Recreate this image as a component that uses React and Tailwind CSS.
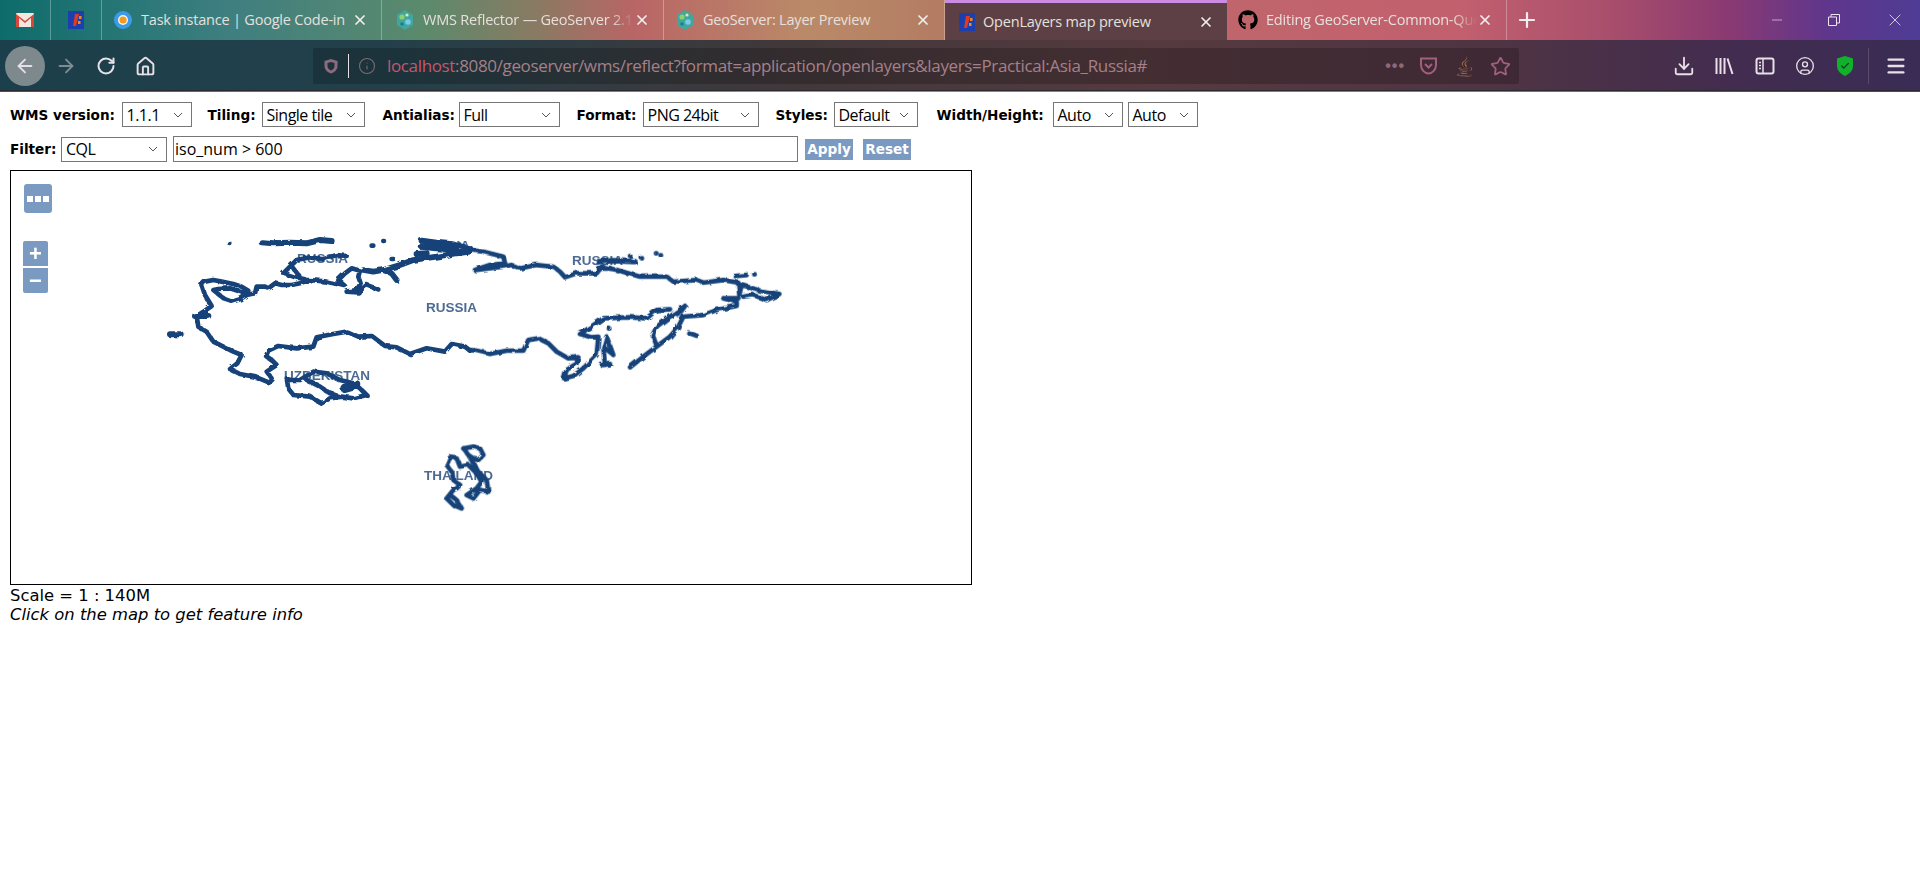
import { ArrowLeft, ArrowRight, RotateCw, Home, Download, X, Plus, Minus, Star, Info, Menu, CircleUser, Check } from "lucide-react";
import { FaGithub, FaJava } from "react-icons/fa";

const OlIcon = () => (
  <svg width="16" height="18" viewBox="0 0 16 18" className="shrink-0">
    <rect width="16" height="18" fill="#1c3fb0" />
    <path d="M5 15 L7 3 L11 3 L8 15 Z" fill="#e23a1e" />
    <rect x="11" y="5" width="2.5" height="3" fill="#f08a20" />
    <rect x="10" y="10" width="2.5" height="3" fill="#f08a20" />
  </svg>
);

const GeoIcon = () => (
  <svg width="20" height="20" viewBox="0 0 20 20" className="shrink-0">
    <path d="M10 0 L18 5 L18 15 L10 20 L2 15 L2 5 Z" fill="#3fa7a0" />
    <circle cx="7" cy="7" r="2.6" fill="#8fd06a" />
    <circle cx="13" cy="12" r="2.8" fill="#7cc8e8" />
    <circle cx="12" cy="5" r="1.6" fill="#dfe9b0" />
    <circle cx="7" cy="14" r="1.8" fill="#1e7f8c" />
  </svg>
);

const CodeInIcon = () => (
  <svg width="20" height="20" viewBox="0 0 20 20" className="shrink-0">
    <circle cx="10" cy="10" r="9" fill="#3b9be8" />
    <circle cx="10" cy="10" r="5" fill="#f5f5f0" />
    <circle cx="10" cy="10" r="3.6" fill="#f59a1c" />
  </svg>
);

const GmailIcon = () => (
  <svg width="18" height="14" viewBox="0 0 18 14">
    <rect width="18" height="14" rx="1" fill="#f1e6e0" />
    <path d="M0 1 L9 8 L18 1 L18 14 L15 14 L15 5 L9 10 L3 5 L3 14 L0 14 Z" fill="#d8483a" />
  </svg>
);

const Tab = ({ icon, title, w, pl, active, fade }) => (
  <div
    className={`h-10 flex items-center shrink-0 ${active ? "bg-[#5d4045] border-t-[3px] border-[#cb8be0]" : "border-r border-white/30"}`}
    style={{ width: w, paddingLeft: pl }}
  >
    {icon}
    <span
      className={`ml-[8px] w-[216px] text-[14.5px] text-[#e6e0dc] whitespace-nowrap overflow-hidden font-['Open_Sans',sans-serif] tracking-[-0.2px] ${fade ? "[mask-image:linear-gradient(to_left,transparent,black_24px)]" : ""}`}
    >
      {title}
    </span>
    <X size={16} strokeWidth={2.6} className="text-[#f2eeee] ml-auto mr-[13px] shrink-0" />
  </div>
);

const Sel = ({ w, children }) => (
  <span
    className="h-[25px] border border-[#767676] bg-white flex items-center pl-[4px] pr-[8px] text-[16px] text-black shrink-0 justify-between font-['Open_Sans',sans-serif] tracking-[-0.5px]"
    style={{ width: w }}
  >
    {children}
    <svg width="10" height="6" viewBox="0 0 10 6" className="shrink-0">
      <path d="M1 1 L5 5 L9 1" fill="none" stroke="#555" strokeWidth="1" />
    </svg>
  </span>
);

const Lbl = ({ w, children }) => (
  <b className="text-[13.6px] pt-[1px] font-bold text-black shrink-0 font-['DejaVu_Sans',sans-serif]" style={{ width: w }}>
    {children}
  </b>
);

const Btn = ({ w, children }) => (
  <span
    className="h-[21px] bg-[#7b9ac2] text-white font-bold text-[13.6px] flex items-center justify-center shrink-0 font-['DejaVu_Sans',sans-serif]"
    style={{ width: w }}
  >
    {children}
  </span>
);

const ZoomBtn = ({ children, cls }) => (
  <div className={`w-[25px] h-[25px] bg-[#7b9ac2] flex items-center justify-center text-white ${cls}`}>{children}</div>
);

const Map = () => (
  <svg width="960" height="413" viewBox="11 171 960 413" className="block blur-[0.4px]">
    <defs>
      <filter id="coast" x="11" y="171" width="960" height="413" filterUnits="userSpaceOnUse">
        <feTurbulence type="fractalNoise" baseFrequency="0.14" numOctaves="2" seed="4" />
        <feDisplacementMap in="SourceGraphic" scale="4" />
      </filter>
    </defs>
    <g fill="#4d6a92" fontFamily="Liberation Sans, sans-serif" fontWeight="700" fontSize="13.5">
      <text x="297" y="263">RUSSIA</text>
      <text x="419" y="250">RUSSIA</text>
      <text x="572" y="265">RUSSIA</text>
      <text x="426" y="312">RUSSIA</text>
      <text x="284" y="380">UZBEKISTAN</text>
      <text x="424" y="480">THAILAND</text>
    </g>
    <g fill="none" stroke="#134279" strokeLinejoin="round" strokeLinecap="round" filter="url(#coast)">
      <g transform="translate(150 220) scale(0.3333)" strokeWidth="14">
        <path d="M155 195 L165 185 L190 180 L215 185 L250 192 L275 200 L295 212 L290 222 L270 215 L240 205 L205 207 L190 210 L205 222 L225 238 L245 245 L270 238 L290 225 L315 220 L320 200 L345 200 L355 205 L375 190 L395 195 L425 195 L450 190 L475 180 L500 182 L530 185 L560 192 L585 198 L565 180 L585 160 L605 145 L630 152 L625 170 L632 190 L620 210 L590 215 L625 217 L650 195 L685 208" />
        <path d="M640 150 L670 155 L700 150 L725 160 L740 180 M700 150 L750 135 L790 120 L860 110 L920 100 L960 95" strokeWidth="17" />
        <path d="M400 160 L425 135 L440 120 L480 112 L520 118 L560 105 L590 108 M400 160 L430 170 L465 178 M430 145 L445 165" />
        <path d="M335 67 L370 70 L420 68 L470 70 L510 60 L545 63" strokeWidth="18" />
        <path d="M241 72 L241 72 M665 77 L670 77 M700 63 L702 63 M725 117 L730 117" strokeWidth="14" />
        <path d="M815 62 L860 68 L900 72 L960 85 M815 80 L860 85 L920 90 M800 102 L830 100" strokeWidth="18" />
        <path d="M155 195 L165 225 L185 258 L165 272 L140 288 L145 320 L170 335 L190 365 L220 380 L250 395 L275 405 L262 430 L240 447 L270 462 L320 472 L358 488 L368 478 L350 455 L380 435 L365 420 L348 408 L355 392 L385 378 L440 385 L490 380 L500 352 L550 342 L590 335 L625 350 L665 348 L705 378 L740 382 L780 402 L830 385 L885 395 L905 372 L945 380 L960 392" />
        <path d="M135 288 L175 288 M60 343 L92 343" strokeWidth="18" />
        <path d="M410 475 L415 505 L430 525 L480 530 L515 550 L540 535 L575 530 L610 535 L650 525 L635 510 L610 490 L570 480 L530 460 L490 455 L450 480 L420 480 L410 475 M470 480 L510 500 L540 520 L570 530" />
        <path d="M585 505 L620 495" strokeWidth="28" />
      </g>
      <g transform="translate(470 220) scale(0.3333)" strokeWidth="14">
        <path d="M0 90 L40 95 L100 110 L105 130 L60 135 L15 150 L100 140 L125 135 L150 145 L200 135 L250 140 L270 155 L285 172 L320 160 L380 160 L395 140 L440 150 L510 170 L590 170 L610 185 L680 180 L700 188 L760 180 L805 188 L808 225 L815 195 L870 212 L928 222 L890 240 L850 225 L820 230" />
        <path d="M385 125 L430 122 L495 125 M385 145 L420 145" strokeWidth="16" />
        <path d="M805 235 L760 235 L800 245 L800 258 L740 270 L700 285 L640 290 L625 320 L600 350 L560 380 L520 410 L480 442 M645 258 L600 290 L560 320 L548 345 L560 378 M645 258 L625 285" />
        <path d="M600 268 L560 270 L530 295 L480 292 L400 295 L370 315 L330 342 L365 352 L385 350 L380 405 L340 445 L310 468 L282 475 L290 450 L320 430 L325 412 L295 415 L260 395 L235 370 L205 355 L175 360 L160 392 L110 392 L60 402 L20 392 L0 390" />
        <path d="M410 350 L400 385 L405 435 M410 350 L430 405 L400 380 M395 435 L420 432" />
        <path d="M417 326 L418 326 M655 338 L680 347 M795 168 L830 165 M853 163 L854 163 M480 108 L481 108 M515 115 L516 115 M558 100 L559 100 M572 106 L573 106" />
      </g>
      <g transform="translate(260 340) scale(0.3333)" strokeWidth="14">
        <path d="M610 325 L640 320 L660 325 L670 345 L655 360 L640 355 L625 345 L610 325 M625 345 L640 370 L655 395 L680 420 L685 455 L660 450 L640 475 L620 465 L650 445 L665 425 L645 395 L625 375 L600 380 L590 355 L570 352 L560 375 L575 395 L580 420 L600 435 L590 445 L580 450 L560 475 L580 495 L605 505 L590 480 L570 465" />
      </g>
    </g>
  </svg>
);

export default function App() {
  return (
    <div className="min-h-[889px] bg-white font-['Liberation_Sans',sans-serif]">
      <header className="h-[92px] bg-[linear-gradient(90deg,#0d6c6a_0%,#3f7f80_12%,#5b8a6c_22%,#8a7a62_28%,#b96566_33%,#ba8a68_42%,#b27a62_50%,#c0666c_62%,#c2606e_76%,#a84e6c_84%,#8a3a72_90%,#60368c_95%,#4e3c94_100%)] flex flex-col">
        <div className="h-10 flex items-center shrink-0">
          <div className="w-[51px] h-10 flex items-center justify-center border-r border-white/30 shrink-0">
            <GmailIcon />
          </div>
          <div className="w-[51px] h-10 flex items-center justify-center border-r border-white/30 shrink-0">
            <OlIcon />
          </div>
          <Tab icon={<CodeInIcon />} title="Task instance | Google Code-in" w={280} pl={11} />
          <Tab icon={<GeoIcon />} title="WMS Reflector — GeoServer 2.16.x User Manual" w={282} pl={13} fade />
          <Tab icon={<GeoIcon />} title="GeoServer: Layer Preview" w={281} pl={11} />
          <Tab icon={<OlIcon />} title="OpenLayers map preview" w={282} pl={14} active />
          <Tab icon={<FaGithub size={20} className="text-black shrink-0" />} title="Editing GeoServer-Common-Query" w={280} pl={11} fade />
          <Plus size={24} strokeWidth={2.2} className="text-[#f4eeee] ml-[8px]" />
          <div className="ml-auto flex items-center text-[#ece4ec]">
            <Minus size={16} strokeWidth={1} className="mr-[42px]" />
            <svg width="14" height="14" viewBox="0 0 14 14" className="mr-[44px]">
              <path d="M1.5 4 H9.5 V12.5 H1.5 Z M4 4 V1.5 H12.5 V10 H9.5" fill="none" stroke="currentColor" />
            </svg>
            <X size={20} strokeWidth={1} className="mr-[15px]" />
          </div>
        </div>
        <div className="h-[51px] pt-[2px] bg-[linear-gradient(90deg,#1b3f4b_0%,#23404a_20%,#40383a_40%,#553a3f_60%,#4f3443_78%,#432c4f_90%,#3a2c55_100%)] border-b border-[#2a2a30] flex items-center shrink-0">
          <div className="w-10 h-10 ml-[5px] rounded-full bg-[#7d898c] flex items-center justify-center">
            <ArrowLeft size={22} strokeWidth={2} className="text-[#e6dfe6]" />
          </div>
          <ArrowRight size={22} strokeWidth={2} className="text-[#7d8d92] ml-[10px]" />
          <RotateCw size={20} strokeWidth={2.4} className="text-[#e8e0e8] ml-[19px]" />
          <Home size={21} strokeWidth={2.2} className="text-[#e8e0e8] ml-[19px]" />
          <div className="ml-[157px] w-[1206px] h-[36px] bg-black/20 rounded-[2px] flex items-center pl-[9px]">
            <svg width="18" height="18" viewBox="0 0 18 18" className="shrink-0">
              <path d="M9 2 L15.5 4 V9 C15.5 13 12 15.5 9 16.5 C6 15.5 2.5 13 2.5 9 V4 Z M9 5 L12.5 6 V9 C12.5 11 11 12.5 9 13.5 C7 12.5 5.5 11 5.5 9 V6 Z" fill="#8d6a80" fillRule="evenodd" />
            </svg>
            <div className="w-px h-6 bg-[#e8e0e8] ml-[8px]" />
            <Info size={18} strokeWidth={1.5} className="text-[#7d6a70] ml-[9px]" />
            <span className="ml-[11px] text-[17px] text-[#a5808a] font-['Open_Sans',sans-serif] tracking-[-0.35px] whitespace-nowrap">
              <span className="text-[#c4576f]">localhost</span>:8080/geoserver/wms/reflect?format=application/openlayers&amp;layers=Practical:Asia_Russia#
            </span>
            <div className="ml-auto flex items-center">
              <span className="text-[#8d6a78] text-[16px] font-bold tracking-[1px] leading-none">•••</span>
              <svg width="21" height="20" viewBox="0 0 21 20" className="ml-[13px]">
                <path d="M3 2.5 H18 V9 C18 14 14 17.5 10.5 17.5 C7 17.5 3 14 3 9 Z M7 8 L10.5 11.5 L14 8" fill="none" stroke="#a0607e" strokeWidth="2" />
              </svg>
              <FaJava size={21} className="text-[#9a6a44] ml-[15px]" />
              <Star size={21} strokeWidth={2} className="text-[#a0607e] ml-[15px] mr-[8px]" />
            </div>
          </div>
          <div className="ml-auto flex items-center text-[#e8dfe8]">
            <Download size={22} strokeWidth={2} className="mr-[19px]" />
            <svg width="20" height="20" viewBox="0 0 20 20" className="mr-[21px]">
              <path d="M2.5 2 V18 M6.5 2 V18 M10.5 2 V18 M13.5 2.5 L18.5 18" fill="none" stroke="currentColor" strokeWidth="2" />
            </svg>
            <svg width="20" height="20" viewBox="0 0 20 20" className="mr-[20px]">
              <rect x="1.5" y="2.5" width="17" height="15" rx="2" fill="none" stroke="currentColor" strokeWidth="2" />
              <path d="M8 3 V17 M4 6.5 H6 M4 9.5 H6 M4 12.5 H6" stroke="currentColor" strokeWidth="1.5" />
            </svg>
            <CircleUser size={20} strokeWidth={1.6} className="mr-[22px]" />
            <div className="relative w-[16px] h-[20px] mr-[15px]">
              <svg width="16" height="20" viewBox="0 0 16 20" className="block">
                <path d="M8 0 L16 2.5 V10 C16 15 12 18 8 20 C4 18 0 15 0 10 V2.5 Z" fill="#12b02c" />
              </svg>
              <Check size={10} strokeWidth={3} className="absolute left-[3px] top-[5px] text-[#1b3a20]" />
            </div>
            <div className="w-px h-9 bg-white/15 mr-[16px]" />
            <Menu size={22} strokeWidth={2.6} className="mr-[13px]" />
          </div>
        </div>
      </header>

      <main className="pl-[10px]">
        <div className="flex items-center h-[25px] mt-[10px]">
          <Lbl w={111.5}>WMS version:</Lbl>
          <Sel w={70}>1.1.1</Sel>
          <span className="w-4 shrink-0" />
          <Lbl w={54}>Tiling:</Lbl>
          <Sel w={103}>Single tile</Sel>
          <span className="w-[18px] shrink-0" />
          <Lbl w={76}>Antialias:</Lbl>
          <Sel w={101}>Full</Sel>
          <span className="w-[17px] shrink-0" />
          <Lbl w={66}>Format:</Lbl>
          <Sel w={116}>PNG 24bit</Sel>
          <span className="w-[17px] shrink-0" />
          <Lbl w={58}>Styles:</Lbl>
          <Sel w={84}>Default</Sel>
          <span className="w-[19px] shrink-0" />
          <Lbl w={116}>Width/Height:</Lbl>
          <Sel w={70}>Auto</Sel>
          <span className="w-[5px] shrink-0" />
          <Sel w={70}>Auto</Sel>
        </div>
        <div className="flex items-center h-[26px] mt-[9px]">
          <Lbl w={51}>Filter:</Lbl>
          <Sel w={106}>CQL</Sel>
          <span className="w-[6px] shrink-0" />
          <span className="w-[625px] h-[26px] border border-[#767676] flex items-center pl-[1px] text-[16px] text-black font-['Open_Sans',sans-serif] shrink-0">iso_num &gt; 600</span>
          <span className="w-[7px] shrink-0" />
          <Btn w={48}>Apply</Btn>
          <span className="w-[10px] shrink-0" />
          <Btn w={48}>Reset</Btn>
        </div>
        <div className="relative w-[962px] h-[415px] border border-black mt-[8px]">
          <Map />
          <div className="absolute left-[13px] top-[13px] w-[28px] h-[29px] bg-[#7b9ac2] rounded-[3px] flex items-center justify-center gap-[2px]">
            <span className="w-[6px] h-[6px] bg-white" />
            <span className="w-[6px] h-[6px] bg-white" />
            <span className="w-[6px] h-[6px] bg-white" />
          </div>
          <div className="absolute left-[12px] top-[70px] flex flex-col gap-[2px]">
            <ZoomBtn cls="rounded-t-[2px] text-[22px] font-bold leading-none">+</ZoomBtn>
            <ZoomBtn cls="rounded-b-[2px] text-[22px] font-bold leading-none">−</ZoomBtn>
          </div>
        </div>
        <div className="text-[16.4px] leading-[19px] text-black font-['DejaVu_Sans',sans-serif] mt-[1px]">Scale = 1 : 140M</div>
        <div className="text-[16.4px] leading-[19px] italic text-black font-['DejaVu_Sans',sans-serif]">Click on the map to get feature info</div>
      </main>
    </div>
  );
}
